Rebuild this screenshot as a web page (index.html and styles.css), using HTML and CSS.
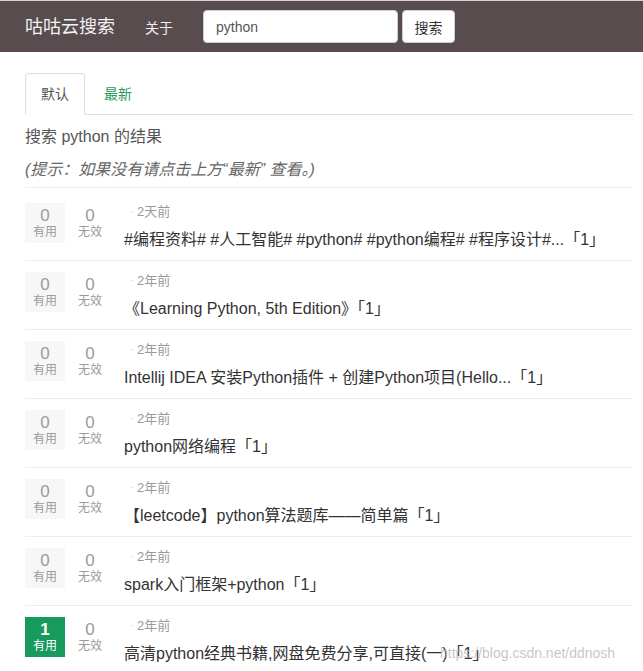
FILE: index.html
```html
<!DOCTYPE html>
<html lang="zh">
<head>
<meta charset="utf-8">
<title>咕咕云搜索</title>
<link rel="stylesheet" href="styles.css">
</head>
<body>
<header class="navbar">
  <span class="brand">咕咕云搜索</span>
  <a class="nav-link">关于</a>
  <form class="search">
    <input class="search-input" type="text" value="python">
    <button class="search-btn" type="button">搜索</button>
  </form>
</header>
<main class="container">
  <ul class="tabs">
    <li class="tab active">默认</li>
    <li class="tab">最新</li>
  </ul>
  <p class="summary">搜索 python 的结果</p>
  <p class="hint">(提示：如果没有请点击上方“最新” 查看。)</p>
  <ul class="results">
    <li class="row first">
      <div class="votes"><div class="vote useful"><span class="num">0</span><span class="lbl">有用</span></div><div class="vote"><span class="num">0</span><span class="lbl">无效</span></div></div>
      <div class="body"><div class="time">2天前</div><div class="title">#编程资料# #人工智能# #python# #python编程# #程序设计#...「1」</div></div>
    </li>
    <li class="row">
      <div class="votes"><div class="vote useful"><span class="num">0</span><span class="lbl">有用</span></div><div class="vote"><span class="num">0</span><span class="lbl">无效</span></div></div>
      <div class="body"><div class="time">2年前</div><div class="title">《Learning Python, 5th Edition》「1」</div></div>
    </li>
    <li class="row">
      <div class="votes"><div class="vote useful"><span class="num">0</span><span class="lbl">有用</span></div><div class="vote"><span class="num">0</span><span class="lbl">无效</span></div></div>
      <div class="body"><div class="time">2年前</div><div class="title">Intellij IDEA 安装Python插件 + 创建Python项目(Hello...「1」</div></div>
    </li>
    <li class="row">
      <div class="votes"><div class="vote useful"><span class="num">0</span><span class="lbl">有用</span></div><div class="vote"><span class="num">0</span><span class="lbl">无效</span></div></div>
      <div class="body"><div class="time">2年前</div><div class="title">python网络编程「1」</div></div>
    </li>
    <li class="row">
      <div class="votes"><div class="vote useful"><span class="num">0</span><span class="lbl">有用</span></div><div class="vote"><span class="num">0</span><span class="lbl">无效</span></div></div>
      <div class="body"><div class="time">2年前</div><div class="title">【leetcode】python算法题库——简单篇「1」</div></div>
    </li>
    <li class="row">
      <div class="votes"><div class="vote useful"><span class="num">0</span><span class="lbl">有用</span></div><div class="vote"><span class="num">0</span><span class="lbl">无效</span></div></div>
      <div class="body"><div class="time">2年前</div><div class="title">spark入门框架+python「1」</div></div>
    </li>
    <li class="row">
      <div class="votes"><div class="vote useful on"><span class="num">1</span><span class="lbl">有用</span></div><div class="vote"><span class="num">0</span><span class="lbl">无效</span></div></div>
      <div class="body"><div class="time">2年前</div><div class="title">高清python经典书籍,网盘免费分享,可直接(一)「1」</div></div>
    </li>
  </ul>
</main>
<div class="watermark">https://blog.csdn.net/ddnosh</div>
</body>
</html>
```
FILE: styles.css
```css
* { box-sizing: border-box; }
html, body { margin: 0; padding: 0; }
body {
  font-family: "Liberation Sans", Arial, "Noto Sans CJK SC", sans-serif;
  font-size: 14px;
  color: #333;
  background: #fff;
  overflow: hidden;
  height: 671px;
  position: relative;
}
.navbar {
  height: 52px;
  background: #594c4f;
  border-top: 1px solid #d8d4d5;
  display: flex;
  align-items: center;
  padding-left: 25px;
}
.brand {
  font-size: 18px;
  color: #f2f2f2;
  line-height: 20px;
}
.nav-link {
  margin-left: 30px;
  font-size: 14px;
  color: #f0f0f0;
}
.search {
  margin-left: 30px;
  display: flex;
  gap: 4px;
}
.search-input {
  width: 195px;
  height: 33px;
  border: 1px solid #ccc;
  border-radius: 4px;
  padding: 0 12px;
  font: 14px "Liberation Sans", Arial, sans-serif;
  color: #555;
  background: #fff;
}
.search-btn {
  width: 53px;
  height: 33px;
  border: 1px solid #ccc;
  border-radius: 4px;
  background: #fff;
  font: 14px "Liberation Sans", Arial, "Noto Sans CJK SC", sans-serif;
  color: #333;
  padding: 0;
}
.container {
  margin: 0 10px 0 25px;
}
.tabs {
  list-style: none;
  margin: 21px 0 0;
  padding: 0;
  display: flex;
  border-bottom: 1px solid #ddd;
}
.tab {
  padding: 0 15px;
  height: 41px;
  line-height: 41px;
  color: #2a9a5c;
  margin-bottom: -1px;
  border: 1px solid transparent;
  border-radius: 4px 4px 0 0;
  margin-right: 3px;
}
.tab.active {
  color: #555;
  background: #fff;
  border-color: #ddd;
  border-bottom-color: #fff;
  height: 42px;
}
.summary {
  margin: 11px 0 0;
  font-size: 16px;
  line-height: 22px;
  color: #555;
}
.hint {
  margin: 11px 0 0;
  font-size: 16px;
  line-height: 22px;
  color: #666;
  font-style: italic;
}
.results {
  list-style: none;
  margin: 6px 0 0;
  padding: 0;
}
.row {
  display: flex;
  align-items: flex-start;
  border-top: 1px solid #eee;
  padding: 11px 0 9px;
}
.row.first { padding-top: 15px; }
.votes {
  display: flex;
  gap: 5px;
}
.vote {
  width: 40px;
  height: 40px;
  display: flex;
  flex-direction: column;
  align-items: center;
  padding-top: 3px;
  color: #9b9b9b;
}
.vote.useful { background: #f7f7f7; }
.vote.on { background: #189a5c; color: #fff; }
.num { font-size: 17px; line-height: 19px; }
.vote.on .num { font-weight: bold; }
.lbl { font-size: 12px; line-height: 15px; }
.body {
  margin-left: 14px;
  flex: 1;
  min-width: 0;
}
.time {
  font-size: 13px;
  line-height: 17px;
  color: #999;
  margin-left: 6px;
  padding-left: 7px;
  position: relative;
}
.time::before {
  content: "·";
  position: absolute;
  left: 0;
  top: 0;
  color: #ccc;
  font-size: 10px;
}
.title {
  margin-top: 9px;
  font-size: 16px;
  line-height: 22px;
  color: #333;
  white-space: nowrap;
}
.watermark {
  position: absolute;
  left: 440px;
  top: 643px;
  font-size: 14px;
  line-height: 20px;
  color: rgba(180, 180, 180, 0.75);
  font-family: "Liberation Sans", Arial, sans-serif;
}
```
